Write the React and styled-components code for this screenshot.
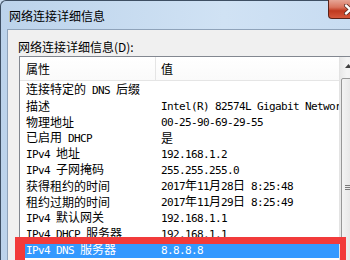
import React from "react";
import styled, { createGlobalStyle } from "styled-components";

const GlobalStyle = createGlobalStyle`
  html, body {
    margin: 0;
    padding: 0;
    overflow: hidden;
    background-color: #c9dcf0;
  }
`;

const Window = styled.div`
  position: relative;
  width: 372px;
  height: 340px;
  border-top: 1px solid #3e4f63;
  border-left: 1px solid #3e4f63;
  border-top-left-radius: 6px;
  background: linear-gradient(90deg, #bcd3eb 0%, #d0e2f4 60%, #c6dbf1 100%);
  font-family: "Noto Sans CJK SC", "Noto Sans", sans-serif;
  color: #000;

  display: flex;
  flex-direction: column;
`;

const TitleBar = styled.div`
  flex-shrink: 0;
  height: 28px;
  padding-left: 8px;

  display: flex;
  flex-direction: row;
  align-items: flex-start;
`;

const Title = styled.div`
  align-self: center;
  margin-top: 1px;
  font-size: 12px;
  line-height: 16px;
`;

const CloseButton = styled.div`
  margin-left: auto;
  margin-top: -1px;
  width: 43px;
  height: 18px;
  border: 1px solid #5a2218;
  border-top: none;
  border-bottom-left-radius: 4px;
  background: linear-gradient(
    180deg,
    #e6a596 0%,
    #d9745e 40%,
    #c0391f 60%,
    #d5583c 100%
  );

  display: flex;
  justify-content: center;
  align-items: center;
`;

const Frame = styled.div`
  flex: 1;
  padding-left: 6px;

  display: flex;
`;

const Client = styled.div`
  flex: 1;
  border-top: 1px solid #8fa3ba;
  border-left: 1px solid #8fa3ba;
  background-color: #f0f0f0;
  padding-left: 10px;

  display: flex;
  flex-direction: column;
`;

const Label = styled.div`
  flex-shrink: 0;
  margin-top: 9px;
  font-size: 12px;
  line-height: 16px;
`;

const ListBox = styled.div`
  flex-shrink: 0;
  margin-top: 1px;
  margin-left: 1px;
  width: 337px;
  height: 260px;
  border: 1px solid #828790;
  background-color: #fff;

  display: flex;
  flex-direction: row;
`;

const ListMain = styled.div`
  flex: 1;
  min-width: 0;

  display: flex;
  flex-direction: column;
`;

const Header = styled.div`
  flex-shrink: 0;
  height: 23px;
  border-bottom: 1px solid #e5e5e5;
  background: linear-gradient(180deg, #ffffff 0%, #fafafa 100%);

  display: flex;
  flex-direction: row;
`;

const HeadCell = styled.div`
  width: ${(props) => (props.$first ? "129px" : "auto")};
  flex: ${(props) => (props.$first ? "none" : "1")};
  padding-left: ${(props) => (props.$first ? "6px" : "5px")};
  padding-top: 4px;
  border-right: ${(props) => (props.$first ? "1px solid #e5e5e5" : "none")};
  font-size: 12px;
  line-height: 16px;
`;

const Rows = styled.div`
  padding-top: 1px;

  display: flex;
  flex-direction: column;
`;

const Row = styled.div`
  flex-shrink: 0;
  height: 16px;
  background-color: ${(props) => (props.$selected ? "#3399ff" : "transparent")};
  color: ${(props) => (props.$selected ? "#fff" : "#000")};

  display: flex;
  flex-direction: row;
  align-items: center;
`;

const Cell = styled.div`
  width: ${(props) => (props.$first ? "129px" : "auto")};
  flex: ${(props) => (props.$first ? "none" : "1")};
  padding-left: 6px;
  white-space: nowrap;
  overflow: hidden;
  font-size: 12px;
  line-height: 16px;
`;

const Half = styled.span`
  font-family: "DejaVu Sans Mono", "Liberation Mono", monospace;
  font-size: 11px;
  letter-spacing: -0.62px;
  white-space: pre;
`;

const ScrollBar = styled.div`
  width: 17px;
  border-left: 1px solid #e3e3e3;
  background: linear-gradient(90deg, #e8e8e8 0%, #f4f4f4 40%, #f0f0f0 100%);

  display: flex;
  flex-direction: column;
  align-items: center;
`;

const ScrollArrow = styled.div`
  flex-shrink: 0;
  height: 17px;
  width: 100%;

  display: flex;
  justify-content: center;
  align-items: center;
`;

const Thumb = styled.div`
  flex-shrink: 0;
  margin-top: 4px;
  width: 14px;
  height: 218px;
  border: 1px solid #979797;
  border-radius: 2px;
  background: linear-gradient(90deg, #f3f3f3 0%, #e9e9e9 50%, #dcdcdc 100%);

  display: flex;
  justify-content: center;
  align-items: center;
`;

const Marker = styled.div`
  position: absolute;
  left: 14px;
  top: 236px;
  width: 315px;
  height: 40px;
  border-top: 7px solid #f23b3b;
  border-left: 10px solid #f23b3b;
  border-right: 6px solid #f23b3b;
`;

const rows = [
  ["连接特定的 DNS 后缀", ""],
  ["描述", "Intel(R) 82574L Gigabit Network Connection"],
  ["物理地址", "00-25-90-69-29-55"],
  ["已启用 DHCP", "是"],
  ["IPv4 地址", "192.168.1.2"],
  ["IPv4 子网掩码", "255.255.255.0"],
  ["获得租约的时间", "2017年11月28日 8:25:48"],
  ["租约过期的时间", "2017年11月29日 8:25:49"],
  ["IPv4 默认网关", "192.168.1.1"],
  ["IPv4 DHCP 服务器", "192.168.1.1"],
  ["IPv4 DNS 服务器", "8.8.8.8"],
];

// latin runs get the half-width monospace, the rest stays CJK
function Mixed({ text }) {
  return text
    .split(/([\x20-\x7e]+)/)
    .map((part, i) => (i % 2 === 1 ? <Half key={i}>{part}</Half> : part));
}

export default function App() {
  return (
    <>
      <GlobalStyle />
      <Window>
        <TitleBar>
          <Title>网络连接详细信息</Title>
          <CloseButton>
            <svg width="13" height="11" viewBox="0 0 13 11">
              <path
                d="M2 1.5 L11 9.5 M11 1.5 L2 9.5"
                stroke="#5a2a22"
                strokeWidth="4"
                strokeLinecap="round"
              />
              <path
                d="M2 1.5 L11 9.5 M11 1.5 L2 9.5"
                stroke="#fff"
                strokeWidth="2.4"
                strokeLinecap="round"
              />
            </svg>
          </CloseButton>
        </TitleBar>

        <Frame>
          <Client>
            <Label>网络连接详细信息(D):</Label>
            <ListBox>
              <ListMain>
                <Header>
                  <HeadCell $first>属性</HeadCell>
                  <HeadCell>值</HeadCell>
                </Header>
                <Rows>
                  {rows.map(([name, value], i) => (
                    <Row key={name} $selected={i === rows.length - 1}>
                      <Cell $first>
                        <Mixed text={name} />
                      </Cell>
                      <Cell>
                        <Mixed text={value} />
                      </Cell>
                    </Row>
                  ))}
                </Rows>
              </ListMain>

              <ScrollBar>
                <ScrollArrow>
                  <svg width="7" height="4" viewBox="0 0 7 4">
                    <path d="M0 4 L3.5 0 L7 4 Z" fill="#404040" />
                  </svg>
                </ScrollArrow>
                <Thumb>
                  <svg width="7" height="6" viewBox="0 0 7 6">
                    <path
                      d="M0 0.5 H7 M0 2.5 H7 M0 4.5 H7"
                      stroke="#7a7a7a"
                      strokeWidth="1"
                    />
                  </svg>
                </Thumb>
              </ScrollBar>
            </ListBox>
          </Client>
        </Frame>

        <Marker />
      </Window>
    </>
  );
}
